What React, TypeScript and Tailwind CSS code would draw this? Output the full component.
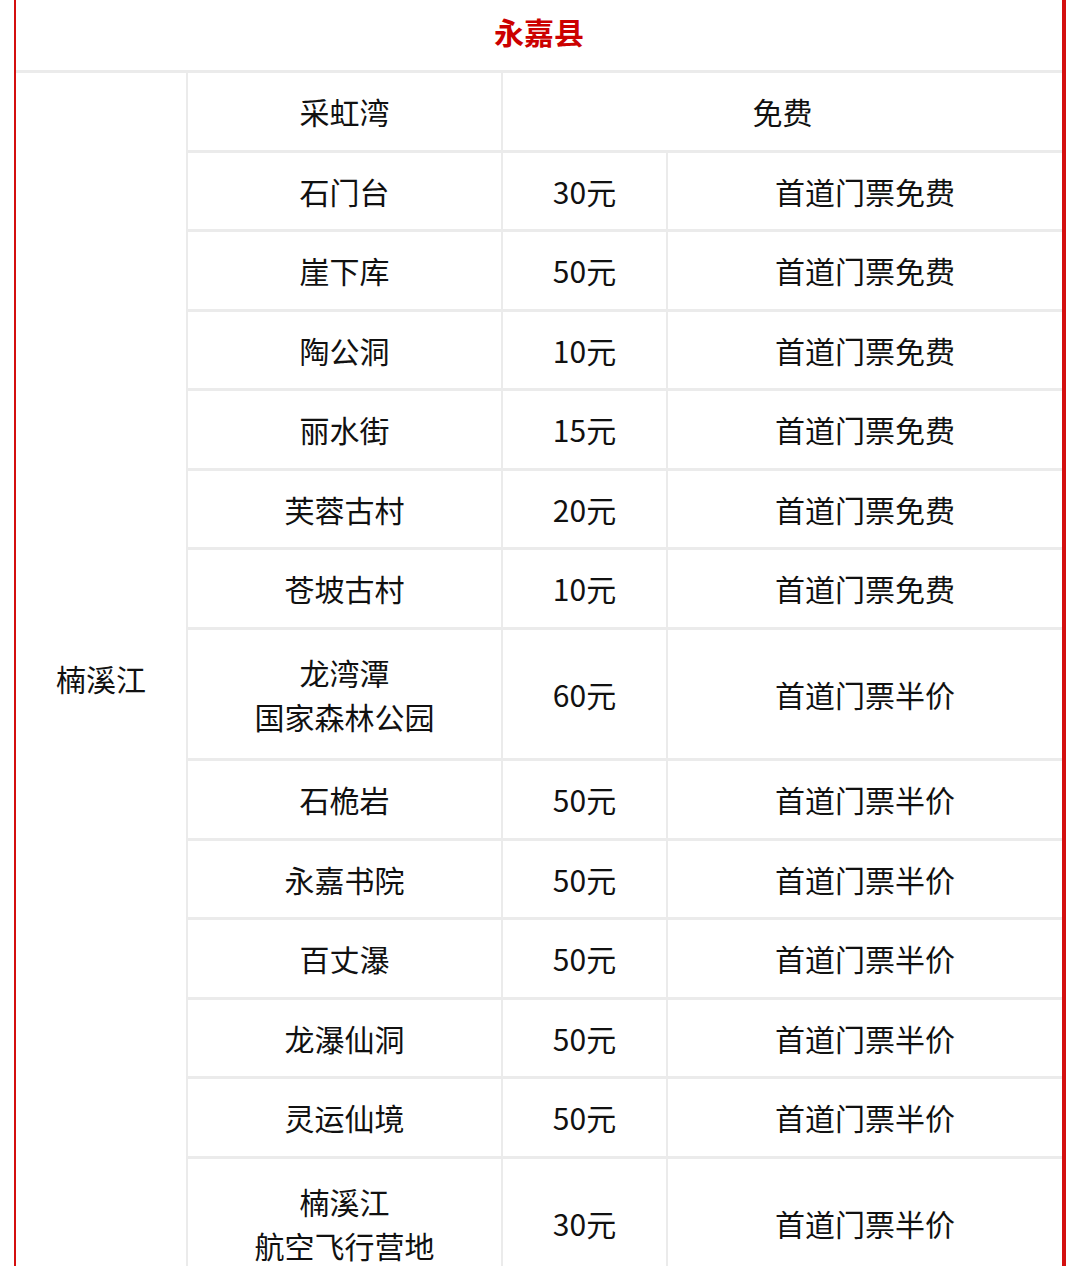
const rows: { name: string[]; price: string; note: string }[] = [
  { name: ["石门台"], price: "30元", note: "首道门票免费" },
  { name: ["崖下库"], price: "50元", note: "首道门票免费" },
  { name: ["陶公洞"], price: "10元", note: "首道门票免费" },
  { name: ["丽水街"], price: "15元", note: "首道门票免费" },
  { name: ["芙蓉古村"], price: "20元", note: "首道门票免费" },
  { name: ["苍坡古村"], price: "10元", note: "首道门票免费" },
  { name: ["龙湾潭", "国家森林公园"], price: "60元", note: "首道门票半价" },
  { name: ["石桅岩"], price: "50元", note: "首道门票半价" },
  { name: ["永嘉书院"], price: "50元", note: "首道门票半价" },
  { name: ["百丈瀑"], price: "50元", note: "首道门票半价" },
  { name: ["龙瀑仙洞"], price: "50元", note: "首道门票半价" },
  { name: ["灵运仙境"], price: "50元", note: "首道门票半价" },
  { name: ["楠溪江", "航空飞行营地"], price: "30元", note: "首道门票半价" },
];

const cell = "bg-white flex items-center justify-center text-center";

export default function App() {
  const rowHeights = ["76.5px", ...rows.map((r) => (r.name.length > 1 ? "128.5px" : "76.5px"))];

  return (
    <div
      className="h-[1266px] w-[1080px] overflow-hidden bg-white text-[30px] leading-[44px] text-[#111]"
      style={{ fontFamily: '"Noto Sans CJK SC", "Noto Sans", sans-serif' }}
    >
      <div className="ml-[14px] w-[1052px] border-l-2 border-r-4 border-l-[#d40f0f] border-r-[#d40f0f] bg-[#ebebeb]">
        <div className="flex h-[70px] items-center justify-center bg-white pb-[8px] font-bold text-[#cc0000]">
          永嘉县
        </div>
        <div
          className="mt-[3px] grid grid-cols-[170px_313px_163px_394px] gap-x-[2px] gap-y-[3px]"
          style={{ gridTemplateRows: rowHeights.join(" ") }}
        >
          <div className={cell} style={{ gridRow: `1 / span ${rows.length + 1}` }}>
            <span className="-mt-[4px]">楠溪江</span>
          </div>
          <div className={cell}>采虹湾</div>
          <div className={`${cell} col-span-2`}>免费</div>
          {rows.map((r, i) => (
            <div key={i} className="contents">
              <div className={`${cell} flex-col`}>
                {r.name.map((n) => (
                  <span key={n}>{n}</span>
                ))}
              </div>
              <div className={cell}>{r.price}</div>
              <div className={cell}>{r.note}</div>
            </div>
          ))}
        </div>
      </div>
    </div>
  );
}
